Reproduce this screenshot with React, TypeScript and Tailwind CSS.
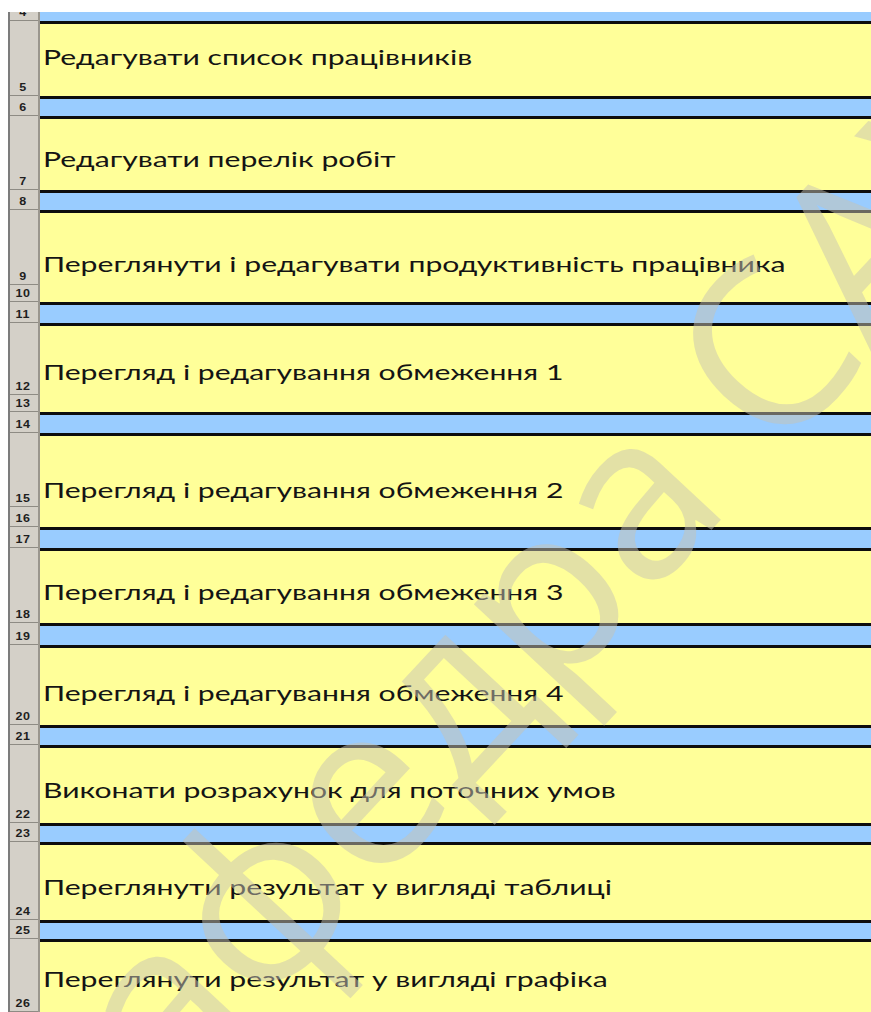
import React from "react";

type RowHead = { n: number; h: string };
type Segment = {
  tone: "blue" | "yellow";
  h: string;
  rows: RowHead[];
  text?: string;
  pt?: string;
  first?: boolean;
};

const segments: Segment[] = [
  { tone: "blue", h: "h-[9px]", rows: [{ n: 4, h: "h-[9px]" }], first: true },
  { tone: "yellow", h: "h-[75px]", rows: [{ n: 5, h: "h-[75px]" }], text: "Редагувати список працівників", pt: "pt-[21px]" },
  { tone: "blue", h: "h-[20px]", rows: [{ n: 6, h: "h-[20px]" }] },
  { tone: "yellow", h: "h-[74px]", rows: [{ n: 7, h: "h-[74px]" }], text: "Редагувати перелік робіт", pt: "pt-[28px]" },
  { tone: "blue", h: "h-[20px]", rows: [{ n: 8, h: "h-[20px]" }] },
  {
    tone: "yellow",
    h: "h-[92px]",
    rows: [
      { n: 9, h: "h-[75px]" },
      { n: 10, h: "h-[17px]" },
    ],
    text: "Переглянути і редагувати продуктивність працівника",
    pt: "pt-[39px]",
  },
  { tone: "blue", h: "h-[21px]", rows: [{ n: 11, h: "h-[21px]" }] },
  {
    tone: "yellow",
    h: "h-[89px]",
    rows: [
      { n: 12, h: "h-[72px]" },
      { n: 13, h: "h-[17px]" },
    ],
    text: "Перегляд і редагування обмеження 1",
    pt: "pt-[34px]",
  },
  { tone: "blue", h: "h-[21px]", rows: [{ n: 14, h: "h-[21px]" }] },
  {
    tone: "yellow",
    h: "h-[94px]",
    rows: [
      { n: 15, h: "h-[74px]" },
      { n: 16, h: "h-[20px]" },
    ],
    text: "Перегляд і редагування обмеження 2",
    pt: "pt-[42px]",
  },
  { tone: "blue", h: "h-[21px]", rows: [{ n: 17, h: "h-[21px]" }] },
  { tone: "yellow", h: "h-[75px]", rows: [{ n: 18, h: "h-[75px]" }], text: "Перегляд і редагування обмеження 3", pt: "pt-[29px]" },
  { tone: "blue", h: "h-[22px]", rows: [{ n: 19, h: "h-[22px]" }] },
  { tone: "yellow", h: "h-[80px]", rows: [{ n: 20, h: "h-[80px]" }], text: "Перегляд і редагування обмеження 4", pt: "pt-[33px]" },
  { tone: "blue", h: "h-[20px]", rows: [{ n: 21, h: "h-[20px]" }] },
  { tone: "yellow", h: "h-[78px]", rows: [{ n: 22, h: "h-[78px]" }], text: "Виконати розрахунок для поточних умов", pt: "pt-[30px]" },
  { tone: "blue", h: "h-[19px]", rows: [{ n: 23, h: "h-[19px]" }] },
  { tone: "yellow", h: "h-[78px]", rows: [{ n: 24, h: "h-[78px]" }], text: "Переглянути результат у вигляді таблиці", pt: "pt-[30px]" },
  { tone: "blue", h: "h-[19px]", rows: [{ n: 25, h: "h-[19px]" }] },
  { tone: "yellow", h: "h-[73px]", rows: [{ n: 26, h: "h-[73px]" }], text: "Переглянути результат у вигляді графіка", pt: "pt-[25px]" },
];

function HeaderCell({ row }: { row: RowHead }) {
  return (
    <div
      className={`${row.h} shrink-0 overflow-hidden flex items-end justify-center border-b border-[#8e8b84] pb-[3px] pr-[2px]`}
    >
      <span className="block text-[10px] leading-[8px] font-bold tracking-[0.5px] text-[#1e1e1e] [font-family:'Liberation_Sans',Arial,sans-serif] scale-x-[1.25] origin-bottom">
        {row.n}
      </span>
    </div>
  );
}

function SegmentRow({ seg }: { seg: Segment }) {
  const fill = seg.tone === "yellow" ? "bg-[#ffff99]" : "bg-[#99ccff]";
  const topLine = seg.first ? "" : "border-t-[3px] border-[#0d0d0d]";
  return (
    <div className={`flex ${seg.h}`}>
      <div className="w-[32px] shrink-0 flex flex-col bg-[#d4d0c8] border-l-2 border-l-[#7c7c7c] border-r-2 border-r-[#9a968e]">
        {seg.rows.map((r) => (
          <HeaderCell key={r.n} row={r} />
        ))}
      </div>
      <div className={`flex-1 min-w-0 ${fill} ${topLine} ${seg.pt ?? ""} pl-[3px]`}>
        {seg.text && (
          <div className="w-max origin-left scale-x-[1.37] text-[22px] leading-[24px] text-[#141414] whitespace-nowrap [font-family:Lato,'Open_Sans',sans-serif]">
            {seg.text}
          </div>
        )}
      </div>
    </div>
  );
}

export default function App() {
  return (
    <div className="relative w-full h-[1012px] overflow-hidden bg-white pt-[12px] pl-[8px]">
      <div className="flex flex-col">
        {segments.map((s, i) => (
          <SegmentRow key={i} seg={s} />
        ))}
      </div>

      {/* faint diagonal watermark laid over the sheet */}
      <div className="pointer-events-none absolute left-[111px] top-[1212px] w-0 h-0 -rotate-[47deg]">
        <span className="absolute left-0 bottom-0 leading-none whitespace-nowrap text-[230px] text-[rgba(200,196,180,0.5)] [font-family:'Open_Sans',sans-serif]">
          кафедра САУ
        </span>
      </div>
    </div>
  );
}
